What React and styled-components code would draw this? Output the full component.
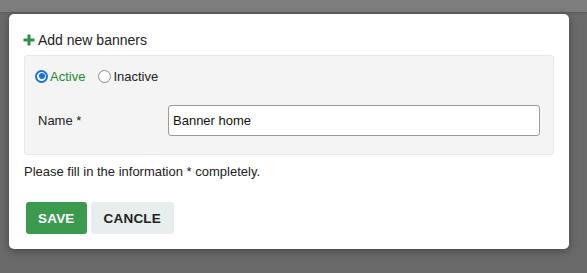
import React, { useState } from "react";
import styled, { createGlobalStyle } from "styled-components";

const Global = createGlobalStyle`
  html, body { margin: 0; padding: 0; background: #6a6a6a; }
  body { font-family: "Liberation Sans", Arial, Helvetica, sans-serif; color: #222; }
  * { box-sizing: border-box; }
`;

const Page = styled.div`
  width: 587px;
  height: 273px;
  overflow: hidden;
  background: #6a6a6a;
`;

const TopStrip = styled.div`
  height: 12px;
  background: #7e7e7e;
  box-shadow: 0 1px 2px rgba(0, 0, 0, 0.15);
`;

const Modal = styled.div`
  margin: 2px 0 0 9px;
  width: 560px;
  background: #fff;
  border-radius: 5px;
  box-shadow: 0 2px 8px rgba(0, 0, 0, 0.35);
  padding: 16px 15px 15px 15px;
`;

const Title = styled.div`
  display: flex;
  align-items: center;
  gap: 3px;
  height: 20px;
  font-size: 14px;
  color: #222;
  margin-bottom: 5px;
  svg { margin-left: -1px; }
`;

const Panel = styled.div`
  background: #f4f4f4;
  border: 1px solid #e7e7e7;
  border-radius: 3px;
  padding: 10px 13px 18px 10px;
`;

const RadioRow = styled.div`
  display: flex;
  align-items: center;
  height: 20px;
`;

const RadioLabel = styled.label`
  display: flex;
  align-items: center;
  font-size: 13px;
  color: ${(p) => (p.$checked ? "#1f8a2e" : "#222")};
  margin-right: ${(p) => (p.$last ? 0 : "13px")};
  cursor: pointer;
`;

const Dot = styled.span`
  width: 13px;
  height: 13px;
  border-radius: 50%;
  margin-right: 2px;
  flex: none;
  background: #fff;
  border: ${(p) => (p.$checked ? "2px solid #1a6fe0" : "1px solid #8a8a8a")};
  display: flex;
  align-items: center;
  justify-content: center;
  &::after {
    content: "";
    display: ${(p) => (p.$checked ? "block" : "none")};
    width: 6px;
    height: 6px;
    border-radius: 50%;
    background: #1a6fe0;
  }
`;

const HiddenInput = styled.input`
  display: none;
`;

const FieldRow = styled.div`
  display: flex;
  align-items: center;
  margin-top: 19px;
  padding-left: 3px;
`;

const FieldLabel = styled.div`
  width: 130px;
  flex: none;
  font-size: 13px;
  color: #222;
`;

const TextInput = styled.input`
  flex: 1;
  height: 31px;
  border: 1px solid #9a9a9a;
  border-radius: 3px;
  background: #fff;
  padding: 0 4px;
  font-family: "Liberation Sans", Arial, Helvetica, sans-serif;
  font-size: 13px;
  color: #111;
  outline: none;
`;

const Help = styled.div`
  margin-top: 9px;
  font-size: 13px;
  line-height: 16px;
  color: #222;
`;

const Actions = styled.div`
  display: flex;
  gap: 4px;
  margin-top: 22px;
  padding-left: 2px;
`;

const Button = styled.button`
  height: 32px;
  padding: 0 ${(p) => (p.$primary ? "12px" : "13px")};
  border: none;
  border-radius: 3px;
  font-family: "Liberation Sans", Arial, Helvetica, sans-serif;
  font-weight: bold;
  font-size: 13.5px;
  letter-spacing: 0.2px;
  text-transform: uppercase;
  background: ${(p) => (p.$primary ? "#3a9a4e" : "#e8eded")};
  color: ${(p) => (p.$primary ? "#fff" : "#222")};
  cursor: pointer;
`;

const PlusIcon = () => (
  <svg width="12" height="12" viewBox="0 0 12 12">
    <rect x="4.5" y="0.5" width="3" height="11" fill="#2f8f4c" />
    <rect x="0.5" y="4.5" width="11" height="3" fill="#2f8f4c" />
  </svg>
);

export default function App() {
  const [active, setActive] = useState(true);
  const [name, setName] = useState("Banner home");
  return (
    <Page>
      <Global />
      <TopStrip />
      <Modal>
        <Title>
          <PlusIcon />
          <span>Add new banners</span>
        </Title>
        <Panel>
          <RadioRow>
            <RadioLabel $checked={active} onClick={() => setActive(true)}>
              <HiddenInput type="radio" name="status" checked={active} readOnly />
              <Dot $checked={active} />
              Active
            </RadioLabel>
            <RadioLabel $checked={!active} $last onClick={() => setActive(false)}>
              <HiddenInput type="radio" name="status" checked={!active} readOnly />
              <Dot $checked={!active} />
              Inactive
            </RadioLabel>
          </RadioRow>
          <FieldRow>
            <FieldLabel>Name *</FieldLabel>
            <TextInput value={name} onChange={(e) => setName(e.target.value)} />
          </FieldRow>
        </Panel>
        <Help>Please fill in the information * completely.</Help>
        <Actions>
          <Button $primary>Save</Button>
          <Button>Cancle</Button>
        </Actions>
      </Modal>
    </Page>
  );
}
